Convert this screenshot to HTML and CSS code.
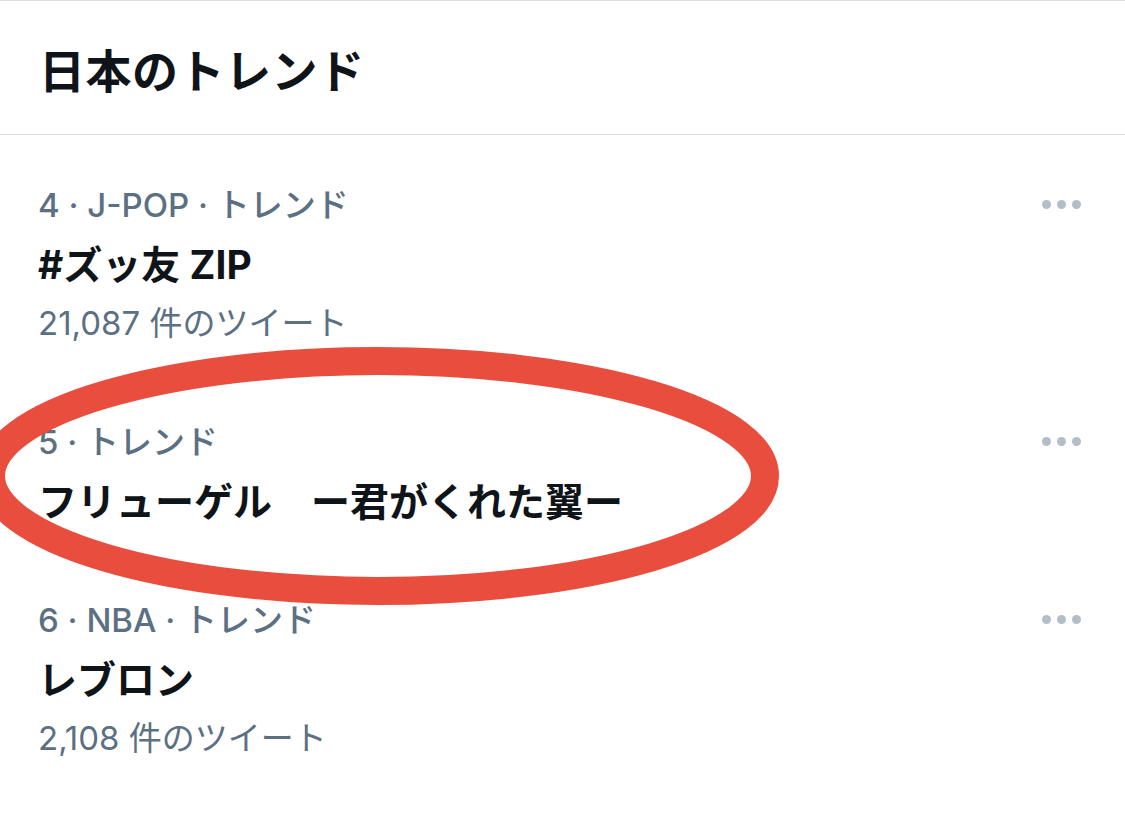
FILE: index.html
```html
<!DOCTYPE html>
<html lang="ja">
<head>
  <meta charset="UTF-8" />
  <title>日本のトレンド</title>
  <link rel="stylesheet" href="styles.css">
</head>
<body>
  <div class="panel">
    <header class="panel-head">
      <h1>日本のトレンド</h1>
    </header>

    <ul class="trends">
      <li class="trend">
        <div class="trend-body">
          <p class="meta">4 · J-POP · トレンド</p>
          <p class="title">#ズッ友 ZIP</p>
          <p class="count">21,087 件のツイート</p>
        </div>
        <span class="more"><i></i><i></i><i></i></span>
      </li>
      <li class="trend">
        <div class="trend-body">
          <p class="meta">5 · トレンド</p>
          <p class="title">フリューゲル　ー君がくれた翼ー</p>
        </div>
        <span class="more"><i></i><i></i><i></i></span>
      </li>
      <li class="trend">
        <div class="trend-body">
          <p class="meta">6 · NBA · トレンド</p>
          <p class="title">レブロン</p>
          <p class="count">2,108 件のツイート</p>
        </div>
        <span class="more"><i></i><i></i><i></i></span>
      </li>
    </ul>

    <!-- marca a mano sobre la tendencia 5 -->
    <svg class="circle-mark" width="1125" height="820" viewBox="0 0 1125 820">
      <ellipse cx="378" cy="475" rx="387" ry="115" fill="none" stroke="#e84d3d" stroke-width="28"/>
    </svg>
  </div>
</body>
</html>
```

FILE: styles.css
```css
:root {
  --text-dark: #0f1419;
  --text-muted: #5b7083;
  --line: #dcdfe2;
  --dots: #b4bec8;
}
* { box-sizing: border-box; margin: 0; padding: 0; }
body {
  background: #ffffff;
  color: var(--text-dark);
  font-family: Inter, "Noto Sans CJK JP", sans-serif;
  overflow: hidden;
}
.panel {
  position: relative;
  width: 1125px;
  height: 820px;
  border-top: 1px solid var(--line);
}

/* CABECERA */
.panel-head {
  height: 134px;
  display: flex;
  align-items: center;
  padding-left: 39px;
  border-bottom: 1px solid var(--line);
}
.panel-head h1 {
  font-family: "Noto Sans CJK JP", sans-serif;
  font-size: 46px;
  font-weight: 700;
  letter-spacing: 0.5px;
}

/* LISTA */
.trends {
  list-style: none;
  padding-top: 11px;
}
.trend {
  display: flex;
  justify-content: space-between;
  align-items: flex-start;
  padding: 30px 44px 30px 38px;
}
.trend p {
  line-height: 59px;
  white-space: nowrap;
}
.meta {
  color: var(--text-muted);
  font-size: 33px;
  font-weight: 500;
}
.title {
  font-size: 39px;
  font-weight: 700;
}
.count {
  color: var(--text-muted);
  font-size: 33px;
}
.more {
  display: flex;
  gap: 6px;
  margin-top: 24px;
}
.more i {
  width: 9px;
  height: 9px;
  border-radius: 50%;
  background: var(--dots);
}

/* MARCA ROJA */
.circle-mark {
  position: absolute;
  top: 0;
  left: 0;
  pointer-events: none;
}
```
